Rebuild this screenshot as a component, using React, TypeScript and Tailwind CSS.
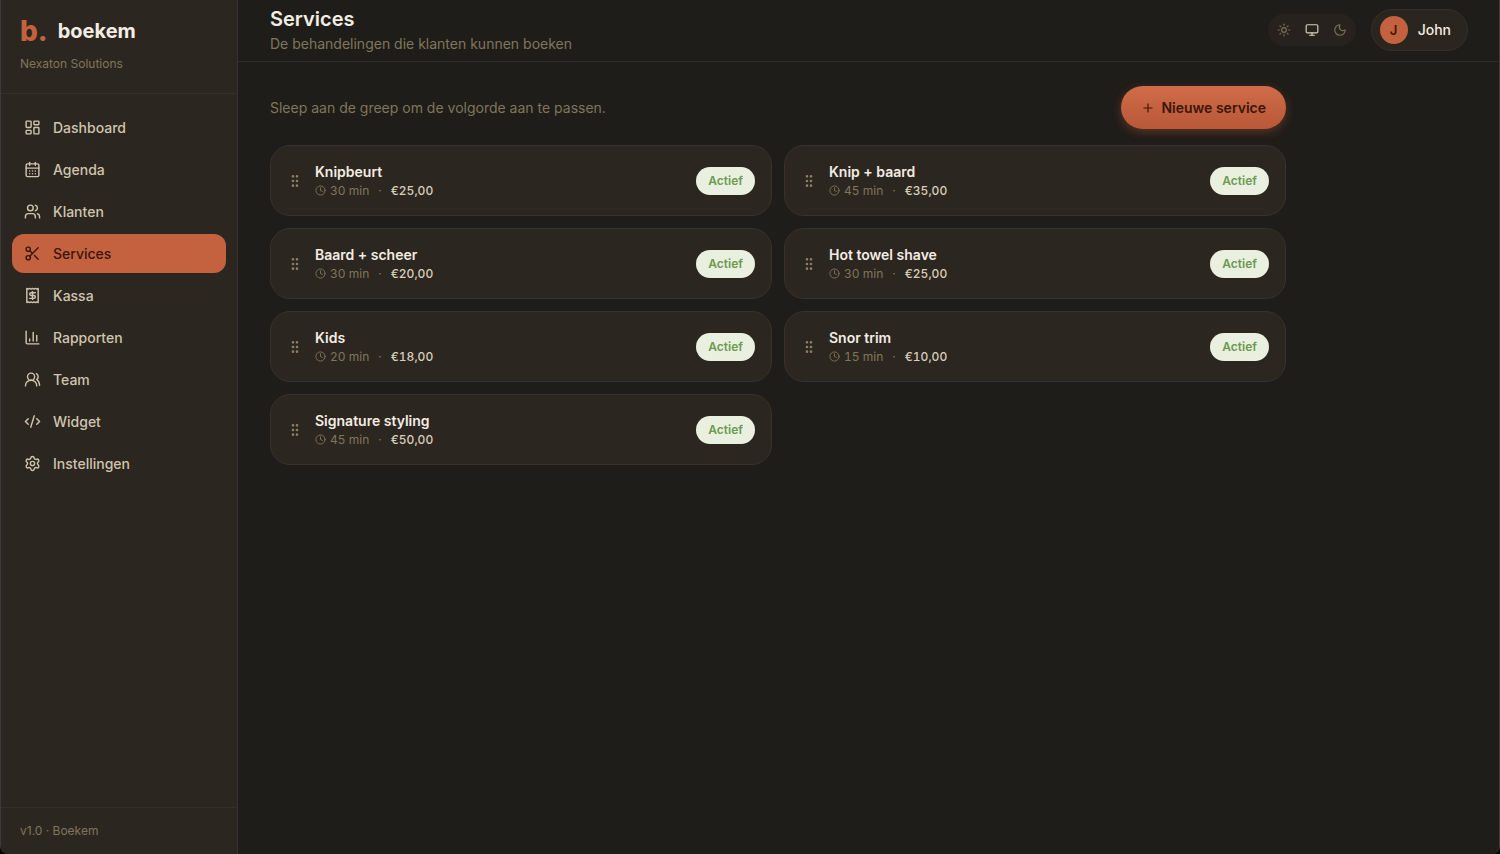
import type { LucideIcon } from 'lucide-react';
import {
  CalendarDays,
  ChartColumn,
  Clock,
  CodeXml,
  GripVertical,
  LayoutDashboard,
  Monitor,
  Moon,
  Plus,
  Receipt,
  Scissors,
  Settings,
  Sun,
  Users,
  UsersRound,
} from 'lucide-react';
import { useState } from 'react';

interface NavItem {
  label: string;
  icon: LucideIcon;
}

interface Service {
  id: number;
  name: string;
  minutes: number;
  price: string;
}

const navItems: NavItem[] = [
  { label: 'Dashboard', icon: LayoutDashboard },
  { label: 'Agenda', icon: CalendarDays },
  { label: 'Klanten', icon: Users },
  { label: 'Services', icon: Scissors },
  { label: 'Kassa', icon: Receipt },
  { label: 'Rapporten', icon: ChartColumn },
  { label: 'Team', icon: UsersRound },
  { label: 'Widget', icon: CodeXml },
  { label: 'Instellingen', icon: Settings },
];

const services: Service[] = [
  { id: 1, name: 'Knipbeurt', minutes: 30, price: '€25,00' },
  { id: 2, name: 'Knip + baard', minutes: 45, price: '€35,00' },
  { id: 3, name: 'Baard + scheer', minutes: 30, price: '€20,00' },
  { id: 4, name: 'Hot towel shave', minutes: 30, price: '€25,00' },
  { id: 5, name: 'Kids', minutes: 20, price: '€18,00' },
  { id: 6, name: 'Snor trim', minutes: 15, price: '€10,00' },
  { id: 7, name: 'Signature styling', minutes: 45, price: '€50,00' },
];

const themes = [
  { key: 'light', label: 'Licht', icon: Sun },
  { key: 'system', label: 'Systeem', icon: Monitor },
  { key: 'dark', label: 'Donker', icon: Moon },
];

function Sidebar() {
  const active = 'Services';

  return (
    <aside className="flex w-[237px] shrink-0 flex-col border-r border-[#35302a] bg-[#2c2620]">
      <div className="border-b border-[#35302a] px-[19px] pt-[15px] pb-5">
        <div className="flex h-8 items-center gap-[10px]">
          <span className="text-[28px] leading-8 font-extrabold text-[#c4623f]">b.</span>
          <span className="text-xl font-bold text-[#f3ede3]">boekem</span>
        </div>
        <p className="mt-2 text-xs leading-[18px] text-[#80765a]">Nexaton Solutions</p>
      </div>

      <nav className="flex flex-1 flex-col gap-[3px] px-[11px] pt-[14px]">
        {navItems.map(({ label, icon: Icon }) => (
          <a
            key={label}
            href="#"
            aria-current={label === active ? 'page' : undefined}
            className={`flex h-[39px] items-center gap-3 rounded-xl px-3 text-sm font-medium ${
              label === active ? 'bg-[#c4623f] text-[#3a160b]' : 'text-[#cfc5ae]'
            }`}
          >
            <Icon size={17} strokeWidth={2} />
            {label}
          </a>
        ))}
      </nav>

      <div className="border-t border-[#35302a] px-[19px] py-[15px] text-xs leading-4 text-[#80765a]">
        v1.0 · Boekem
      </div>
    </aside>
  );
}

function ThemeSwitch() {
  const [theme, setTheme] = useState('system');

  return (
    <div className="flex items-center rounded-full bg-[#27221d] p-[2px]">
      {themes.map(({ key, label, icon: Icon }) => (
        <button
          key={key}
          type="button"
          aria-label={label}
          onClick={() => setTheme(key)}
          className={`flex size-7 items-center justify-center rounded-full ${
            theme === key ? 'text-[#d8cfba]' : 'text-[#7a7058]'
          }`}
        >
          <Icon size={14} strokeWidth={2} />
        </button>
      ))}
    </div>
  );
}

function Header() {
  return (
    <header className="flex items-center justify-between border-b border-[#302c27] pt-[5px] pr-[31px] pb-[6px] pl-8">
      <div>
        <h1 className="text-xl leading-7 font-semibold text-[#f3ede3]">Services</h1>
        <p className="text-sm leading-[22px] text-[#80765a]">De behandelingen die klanten kunnen boeken</p>
      </div>
      <div className="flex items-center gap-[15px]">
        <ThemeSwitch />
        <button
          type="button"
          className="flex h-[42px] items-center gap-[10px] rounded-full border border-[#35302a] bg-[#2a251f] pr-4 pl-2 text-sm font-medium text-[#f3ede3]"
        >
          <span className="flex size-7 items-center justify-center rounded-full bg-[#c4623f] text-[13px] font-semibold text-[#3a160b]">
            J
          </span>
          John
        </button>
      </div>
    </header>
  );
}

function ServiceCard({ service }: { service: Service }) {
  return (
    <li className="flex h-[71px] items-center rounded-[20px] border border-[#38322b] bg-[#2c2620] px-4">
      <button type="button" aria-label={`Versleep ${service.name}`} className="cursor-grab text-[#8a8064]">
        <GripVertical size={16} />
      </button>
      <div className="ml-3 flex-1">
        <h2 className="text-sm leading-5 font-semibold text-[#f3ede3]">{service.name}</h2>
        <div className="flex items-center text-xs leading-[18px] text-[#80765a] tabular-nums">
          <Clock size={11} className="mr-1" />
          {service.minutes} min
          <span className="mx-[9px]">·</span>
          <span className="font-medium text-[#d8cfba]">{service.price}</span>
        </div>
      </div>
      <span className="rounded-full bg-[#e9f0df] px-3 py-[6px] text-xs leading-4 font-semibold text-[#6b9a50]">Actief</span>
    </li>
  );
}

export default function App() {
  return (
    <div className="min-h-screen bg-black font-['Inter',sans-serif]">
      <div className="flex min-h-screen overflow-hidden rounded-b-lg border-x border-[#3d3a35] bg-[#1f1d19]">
        <Sidebar />
        <div className="min-w-0 flex-1">
          <Header />
          <main className="px-8 pt-6">
            <div className="max-w-[1016px]">
              <div className="mb-4 flex items-center justify-between">
                <p className="text-sm text-[#80765a]">Sleep aan de greep om de volgorde aan te passen.</p>
                <button
                  type="button"
                  className="flex h-[43px] items-center gap-[6px] rounded-full bg-linear-to-b from-[#d06c49] to-[#b85836] px-5 text-sm font-semibold text-[#3a160b] shadow-[0_3px_10px_rgba(196,98,63,0.35)]"
                >
                  <Plus size={14} strokeWidth={2} />
                  Nieuwe service
                </button>
              </div>
              <ul className="grid grid-cols-2 gap-3">
                {services.map((service) => (
                  <ServiceCard key={service.id} service={service} />
                ))}
              </ul>
            </div>
          </main>
        </div>
      </div>
    </div>
  );
}
